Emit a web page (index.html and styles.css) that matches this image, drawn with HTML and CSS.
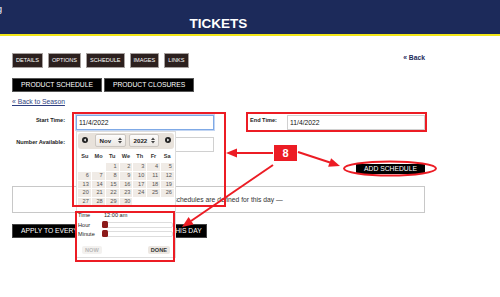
FILE: index.html
```html
<!DOCTYPE html>
<html lang="en">
<head>
    <meta charset="UTF-8">
    <title>Tickets - Product Schedule</title>
    <link rel="stylesheet" href="styles.css">
</head>
<body>
    <div class="masthead">
        <span class="brand">g</span>
        <h1>TICKETS</h1>
    </div>

    <div class="page">
        <div class="toolbar">
            <ul class="tabs">
                <li><a href="#">DETAILS</a></li>
                <li><a href="#">OPTIONS</a></li>
                <li><a href="#">SCHEDULE</a></li>
                <li><a href="#">IMAGES</a></li>
                <li><a href="#">LINKS</a></li>
            </ul>
            <a class="back" href="#">&laquo; Back</a>
        </div>

        <div class="subtabs">
            <a href="#">PRODUCT SCHEDULE</a>
            <a href="#">PRODUCT CLOSURES</a>
        </div>

        <p class="crumbs"><a href="#">&laquo; Back to Season</a></p>

        <div class="schedule-form">
            <label class="label-start">Start Time:</label>
            <div class="start-field">
                <input class="focused" type="text" value="11/4/2022">
                <div class="datepicker">
                    <div class="dp-header">
                        <svg class="dp-nav" width="6" height="6" viewBox="0 0 6 6"><circle cx="3" cy="3" r="3" fill="#222"/><polygon points="1.6,3 3.8,1.6 3.8,4.4" fill="#fff"/></svg>
                        <div class="dp-title">
                            <span class="pick pick-month">Nov<svg width="4" height="7" viewBox="0 0 4 7"><polygon points="0,3 2,0.5 4,3" fill="#444"/><polygon points="0,4 2,6.5 4,4" fill="#444"/></svg></span>
                            <span class="pick pick-year">2022<svg width="4" height="7" viewBox="0 0 4 7"><polygon points="0,3 2,0.5 4,3" fill="#444"/><polygon points="0,4 2,6.5 4,4" fill="#444"/></svg></span>
                        </div>
                        <svg class="dp-nav" width="6" height="6" viewBox="0 0 6 6"><circle cx="3" cy="3" r="3" fill="#222"/><polygon points="4.4,3 2.2,1.6 2.2,4.4" fill="#fff"/></svg>
                    </div>
                    <div class="dp-weekdays">
                        <span>Su</span><span>Mo</span><span>Tu</span><span>We</span><span>Th</span><span>Fr</span><span>Sa</span>
                    </div>
                    <div class="dp-days">
                        <span class="blank"></span><span class="blank"></span><span>1</span><span>2</span><span>3</span><span>4</span><span>5</span>
                        <span>6</span><span>7</span><span>8</span><span>9</span><span>10</span><span>11</span><span>12</span>
                        <span>13</span><span>14</span><span>15</span><span>16</span><span>17</span><span>18</span><span>19</span>
                        <span>20</span><span>21</span><span>22</span><span>23</span><span>24</span><span>25</span><span>26</span>
                        <span>27</span><span>28</span><span>29</span><span>30</span><span class="blank"></span><span class="blank"></span><span class="blank"></span>
                    </div>
                    <div class="tp">
                        <div class="tp-row tp-time"><span>Time</span><span>12:00 am</span></div>
                        <div class="tp-row"><span>Hour</span><div class="slider"><span class="handle"></span></div></div>
                        <div class="tp-row"><span>Minute</span><div class="slider"><span class="handle"></span></div></div>
                    </div>
                    <div class="dp-buttons">
                        <span class="dp-btn btn-now">NOW</span>
                        <span class="dp-btn btn-done">DONE</span>
                    </div>
                </div>
            </div>
            <label class="label-end">End Time:</label>
            <input type="text" value="11/4/2022">

            <label class="label-start">Number Available:</label>
            <input type="text" value="">
        </div>

        <div class="actions">
            <button class="btn-add" type="button">ADD SCHEDULE</button>
        </div>

        <div class="empty">&mdash; No schedules are defined for this day &mdash;</div>

        <button class="btn-apply" type="button">APPLY TO EVERY FRIDAY IN NOVEMBER LIKE THIS DAY</button>
    </div>

    <svg class="marks" width="500" height="297" viewBox="0 0 500 297">
        <g fill="none" stroke="#ec1c24" stroke-width="2">
            <rect x="73" y="113" width="152" height="93"/>
            <rect x="247" y="113" width="179" height="18"/>
            <rect x="76" y="212" width="98" height="49"/>
            <ellipse cx="390" cy="168.5" rx="46" ry="7"/>
            <line x1="273" y1="153" x2="236" y2="153"/>
            <line x1="298" y1="152" x2="330" y2="162.5"/>
            <line x1="273" y1="165" x2="191" y2="221"/>
        </g>
        <g fill="#ec1c24">
            <polygon points="226,153 237,148.5 237,157.5"/>
            <polygon points="340,166 328.1,166.7 331.1,158.2"/>
            <polygon points="182,227 188.6,217.1 193.6,224.5"/>
        </g>
    </svg>
    <div class="callout">8</div>
</body>
</html>
```

FILE: styles.css
```css
body {
    margin: 0;
    min-height: 100vh;
    font-family: "Liberation Sans", Arial, sans-serif;
    font-size: 6.75px;
    color: #333;
    background-color: #fff;
    overflow: hidden;
}
.masthead {
    height: 34px;
    background-color: #1c2a5a;
    border-bottom: 2px solid #f2e619;
    color: #fff;
    overflow: hidden;
}
.brand {
    display: block;
    margin-left: -3px;
    padding-top: 5px;
    font-size: 9px;
    line-height: 9px;
}
.masthead h1 {
    width: 413px;
    margin: 3px 0 0 12px;
    font-size: 13.5px;
    line-height: 14px;
    text-align: center;
}
.page {
    width: 413px;
    margin: 0 12px;
}
.toolbar {
    display: flex;
    justify-content: space-between;
    align-items: flex-start;
    margin-top: 17px;
}
.tabs {
    display: flex;
    gap: 5px;
    margin: 0;
    padding: 0;
    list-style: none;
}
.tabs a {
    display: block;
    height: 13px;
    padding: 0 3px;
    border: 1px solid #a8a2a0;
    background-color: #2c201e;
    color: #fff;
    font-size: 5.6px;
    line-height: 13px;
    text-decoration: none;
}
.back {
    margin-top: 1px;
    color: #1c2a5a;
    font-weight: bold;
    line-height: 8px;
    text-decoration: none;
}
.subtabs {
    display: flex;
    gap: 2px;
    margin-top: 10px;
}
.subtabs a {
    display: block;
    height: 12px;
    padding: 0 8px;
    border: 1px solid #555;
    background-color: #000;
    color: #fff;
    line-height: 12px;
    text-decoration: none;
}
.crumbs {
    margin: 6px 0 0;
    line-height: 8px;
}
.crumbs a {
    color: #2d3e80;
}
.schedule-form {
    display: grid;
    grid-template-columns: 64px 138px 73px 138px;
    row-gap: 7px;
    margin-top: 9px;
}
.schedule-form label {
    padding-top: 2px;
    font-size: 5.6px;
    font-weight: bold;
    line-height: 7px;
    color: #222;
}
.label-start {
    padding-right: 11px;
    text-align: right;
}
.label-end {
    padding-left: 36px;
}
.schedule-form input {
    box-sizing: border-box;
    width: 138px;
    height: 15px;
    margin: 0;
    padding: 0 2px;
    border: 1px solid #d0d0d0;
    font-family: "Liberation Sans", Arial, sans-serif;
    font-size: 6.75px;
    color: #111;
}
.schedule-form input.focused {
    border-color: #7fa9e6;
    box-shadow: 0 0 0 1px #c3d6f3;
    outline: none;
}
.start-field {
    position: relative;
}
.datepicker {
    position: absolute;
    top: 16px;
    left: 0;
    z-index: 2;
    width: 96px;
    padding: 1px 1px 3px;
    border: 1px solid #ddd;
    background-color: #fff;
}
.dp-header {
    display: flex;
    align-items: flex-start;
    justify-content: space-between;
    height: 16px;
    padding: 0 3px 0 4px;
    border-radius: 3px;
    background-color: #e8e2db;
}
.dp-nav {
    margin-top: 4px;
}
.dp-title {
    display: flex;
    gap: 3px;
    margin-top: 1px;
}
.pick {
    box-sizing: border-box;
    display: flex;
    align-items: center;
    justify-content: space-between;
    height: 13px;
    padding: 0 3px 0 4px;
    border: 1px solid #cbc6c1;
    border-radius: 2px;
    background: linear-gradient(#fdfcfb, #ebe7e3);
    font-size: 6.2px;
    font-weight: bold;
    color: #222;
}
.pick-month {
    width: 31px;
}
.pick-year {
    width: 30px;
}
.dp-weekdays {
    display: grid;
    grid-template-columns: repeat(7, 1fr);
    margin-top: 2px;
    font-size: 5.6px;
    font-weight: bold;
    line-height: 10px;
    text-align: center;
    color: #333;
}
.dp-days {
    display: grid;
    grid-template-columns: repeat(7, 1fr);
    grid-auto-rows: 7.75px;
    gap: 1px;
    margin-top: 2px;
    font-size: 5.6px;
    line-height: 7.75px;
    text-align: right;
    color: #555;
}
.dp-days span {
    padding-right: 2px;
    background-color: #f0ebe6;
}
.dp-days span.blank {
    background-color: transparent;
}
.tp {
    margin-top: 5px;
    font-size: 5.6px;
    line-height: 8px;
    color: #222;
}
.tp-row {
    display: grid;
    grid-template-columns: 26px 1fr;
    align-items: center;
    height: 9px;
}
.tp-time {
    height: 8px;
    margin-bottom: 2px;
}
.slider {
    position: relative;
    height: 4px;
    margin-right: 1px;
    border: 1px solid #ddd;
    border-radius: 2px;
    background-color: #fff;
}
.handle {
    position: absolute;
    top: -2px;
    left: -3px;
    width: 6px;
    height: 7px;
    border-radius: 1.5px;
    background-color: #8c1b1b;
}
.dp-buttons {
    display: flex;
    justify-content: space-between;
    height: 8px;
    margin-top: 7px;
    padding: 0 4px;
}
.dp-btn {
    display: block;
    height: 8px;
    padding: 0 3px;
    border-radius: 2px;
    font-size: 5.6px;
    font-weight: bold;
    line-height: 8px;
}
.btn-now {
    background-color: #f3f1ef;
    color: #b8b8b8;
}
.btn-done {
    background-color: #ece7e2;
    color: #333;
}
.actions {
    display: flex;
    justify-content: flex-end;
    margin-top: 12px;
}
.btn-add,
.btn-apply {
    margin: 0;
    border: none;
    background-color: #000;
    color: #fff;
    font-family: "Liberation Sans", Arial, sans-serif;
    font-size: 6.75px;
    white-space: nowrap;
}
.btn-add {
    height: 10px;
    padding: 0 8px;
    line-height: 10px;
}
.empty {
    box-sizing: border-box;
    display: flex;
    align-items: center;
    justify-content: center;
    height: 27px;
    margin-top: 12px;
    border: 1px solid #c8c8c8;
    color: #333;
}
.btn-apply {
    display: block;
    width: 195px;
    height: 14px;
    margin-top: 11px;
    padding: 0 8px;
    border: 1px solid #444;
    text-align: left;
    line-height: 12px;
    overflow: hidden;
}
.marks {
    position: absolute;
    top: 0;
    left: 0;
    z-index: 3;
    pointer-events: none;
}
.callout {
    position: absolute;
    top: 145px;
    left: 274px;
    z-index: 4;
    width: 23px;
    height: 16px;
    background-color: #ec1c24;
    color: #fff;
    font-size: 11px;
    font-weight: bold;
    line-height: 16px;
    text-align: center;
}
```
